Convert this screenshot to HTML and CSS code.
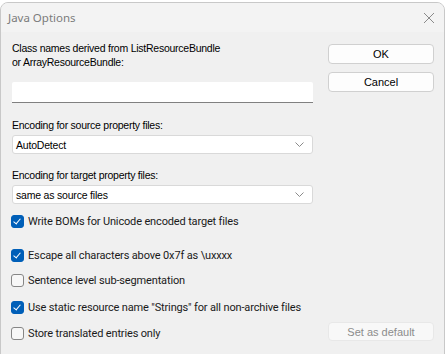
FILE: index.html
```html
<!DOCTYPE html>
<html lang="en">
<head>
    <meta charset="UTF-8">
    <title>Java Options</title>
    <link rel="stylesheet" href="styles.css">
</head>
<body>
    <div class="window">
        <div class="title-bar">
            <span class="title">Java Options</span>
            <svg class="close-icon" width="12" height="12" viewBox="0 0 12 12">
                <path d="M1 1 L11 11 M11 1 L1 11" stroke="#8a8a8a" stroke-width="1" fill="none"/>
            </svg>
        </div>
        <div class="dialog-body">
            <div class="left-col">
                <div class="label two-line">Class names derived from ListResourceBundle<br>or ArrayResourceBundle:</div>
                <div class="text-input"></div>

                <div class="label label-gap">Encoding for source property files:</div>
                <div class="select">
                    <span>AutoDetect</span>
                    <svg class="chevron" width="9" height="5" viewBox="0 0 9 5"><path d="M0.5 0.5 L4.5 4.5 L8.5 0.5" stroke="#8a8a8a" fill="none"/></svg>
                </div>

                <div class="label label-gap">Encoding for target property files:</div>
                <div class="select">
                    <span>same as source files</span>
                    <svg class="chevron" width="9" height="5" viewBox="0 0 9 5"><path d="M0.5 0.5 L4.5 4.5 L8.5 0.5" stroke="#8a8a8a" fill="none"/></svg>
                </div>

                <div class="check-row row-1"><span class="box checked"></span>Write BOMs for Unicode encoded target files</div>
                <div class="check-row row-2"><span class="box checked"></span>Escape all characters above 0x7f as \uxxxx</div>
                <div class="check-row row-3"><span class="box"></span>Sentence level sub-segmentation</div>
                <div class="check-row row-4"><span class="box checked"></span>Use static resource name "Strings" for all non-archive files</div>
                <div class="check-row row-5"><span class="box"></span>Store translated entries only</div>
            </div>
            <div class="right-col">
                <button class="btn">OK</button>
                <button class="btn btn-cancel">Cancel</button>
                <button class="btn btn-disabled">Set as default</button>
            </div>
        </div>
    </div>
</body>
</html>
```

FILE: styles.css
```css
body {
    margin: 0;
    background-color: #ffffff;
    font-family: "Liberation Sans", Arial, sans-serif;
    overflow: hidden;
}
.window {
    margin-top: 2px;
    width: 443px;
    height: 358px;
    background-color: #f0f0f0;
    border: 1px solid #c8c8c8;
    border-radius: 8px;
    overflow: hidden;
}
.title-bar {
    height: 29px;
    background-color: #f3f3f3;
    display: flex;
    align-items: center;
    justify-content: space-between;
    padding: 0 9px 0 7px;
}
.title {
    font-family: "Noto Sans", sans-serif;
    font-size: 11.5px;
    color: #7b7b7b;
}
.close-icon {
    display: block;
}
.dialog-body {
    display: flex;
    padding: 9px 0 0 10px;
}
.left-col {
    width: 302px;
    display: flex;
    flex-direction: column;
}
.right-col {
    margin-left: 15px;
    width: 106px;
    display: flex;
    flex-direction: column;
}
.label {
    font-size: 10.5px;
    letter-spacing: -0.25px;
    line-height: 14px;
    color: #000;
    padding-left: 1px;
    white-space: nowrap;
}
.label-gap {
    margin-top: 15px;
}
.text-input {
    margin-top: 13px;
    margin-left: 1px;
    height: 20px;
    background-color: #fff;
    border-bottom: 1px solid #808080;
    border-radius: 2px 2px 0 0;
}
.select {
    margin-top: 3px;
    margin-left: 1px;
    height: 17px;
    background-color: #fff;
    border: 1px solid #d9d9d9;
    border-radius: 3px;
    display: flex;
    align-items: center;
    justify-content: space-between;
    padding: 0 8px 0 3px;
    font-size: 10.5px;
    letter-spacing: -0.2px;
}
.select + .label {
    margin-top: 14px;
}
.check-row {
    display: flex;
    align-items: center;
    height: 16px;
    font-family: Roboto, sans-serif;
    font-size: 11px;
    letter-spacing: -0.15px;
    color: #1a1a1a;
    white-space: nowrap;
}
.row-1 { margin-top: 9px; }
.row-2 { margin-top: 18px; }
.row-3 { margin-top: 9px; }
.row-4 { margin-top: 11px; }
.row-5 { margin-top: 10px; }
.box {
    width: 11px;
    height: 11px;
    border: 1px solid #868686;
    border-radius: 3px;
    background-color: #f7f7f7;
    margin-right: 4px;
    flex-shrink: 0;
    position: relative;
}
.box.checked {
    background-color: #005fb8;
    border-color: #005fb8;
}
.box.checked::after {
    content: "";
    position: absolute;
    left: 3px;
    top: 1px;
    width: 3px;
    height: 6px;
    border-right: 1.2px solid #fff;
    border-bottom: 1.2px solid #fff;
    transform: rotate(40deg);
}
.btn {
    height: 20px;
    width: 106px;
    background-color: #fdfdfd;
    border: 1px solid #d0d0d0;
    border-radius: 4px;
    font-family: "Liberation Sans", Arial, sans-serif;
    font-size: 11px;
    color: #000;
    padding: 0;
}
.btn:first-child {
    margin-top: 3px;
}
.btn-cancel {
    margin-top: 8px;
}
.btn-disabled {
    margin-top: auto;
    margin-bottom: 0;
    height: 19px;
    background-color: #f8f8f8;
    border-color: #e8e8e8;
    color: #8c8c8c;
}
```
